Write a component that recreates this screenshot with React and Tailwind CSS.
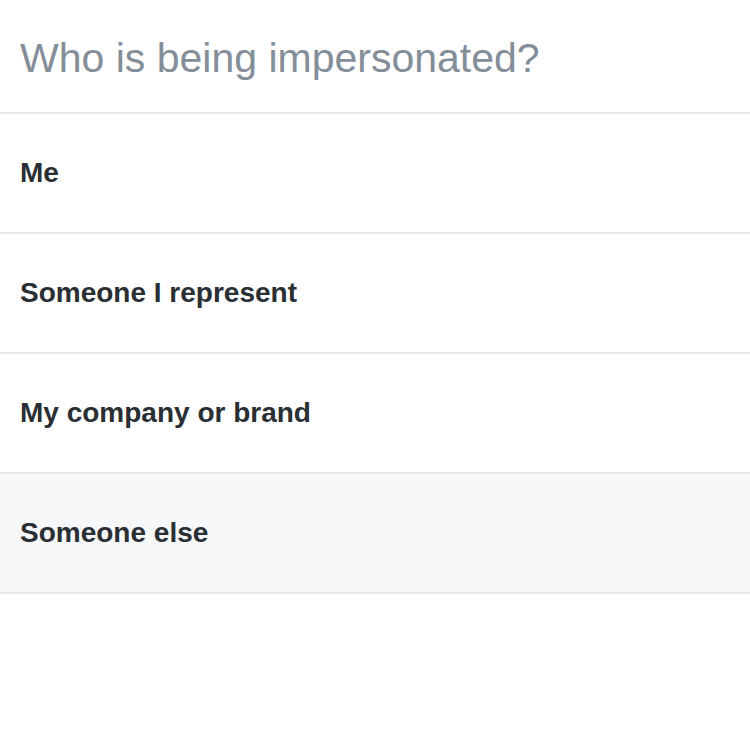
const OPTIONS = ['Me', 'Someone I represent', 'My company or brand', 'Someone else']

export default function App() {
    return (
        <div className="w-[750px] h-[750px] bg-white font-['Liberation_Sans',Arial,sans-serif]">
            <div className="h-[114px] flex items-center px-5 border-b-2 border-[#e6e9eb]">
                <h1 className="text-[41px] font-light text-[#838e98] leading-none mt-1">
                    Who is being impersonated?
                </h1>
            </div>
            {OPTIONS.map((label, i) => (
                <div
                    key={label}
                    className={`h-[120px] flex items-center px-5 border-b-2 border-[#e6e9eb] ${i === 3 ? 'bg-[#f5f7f9]' : ''}`}
                >
                    <span className="text-[28px] font-bold text-[#292f33] leading-none">{label}</span>
                </div>
            ))}
        </div>
    )
}
